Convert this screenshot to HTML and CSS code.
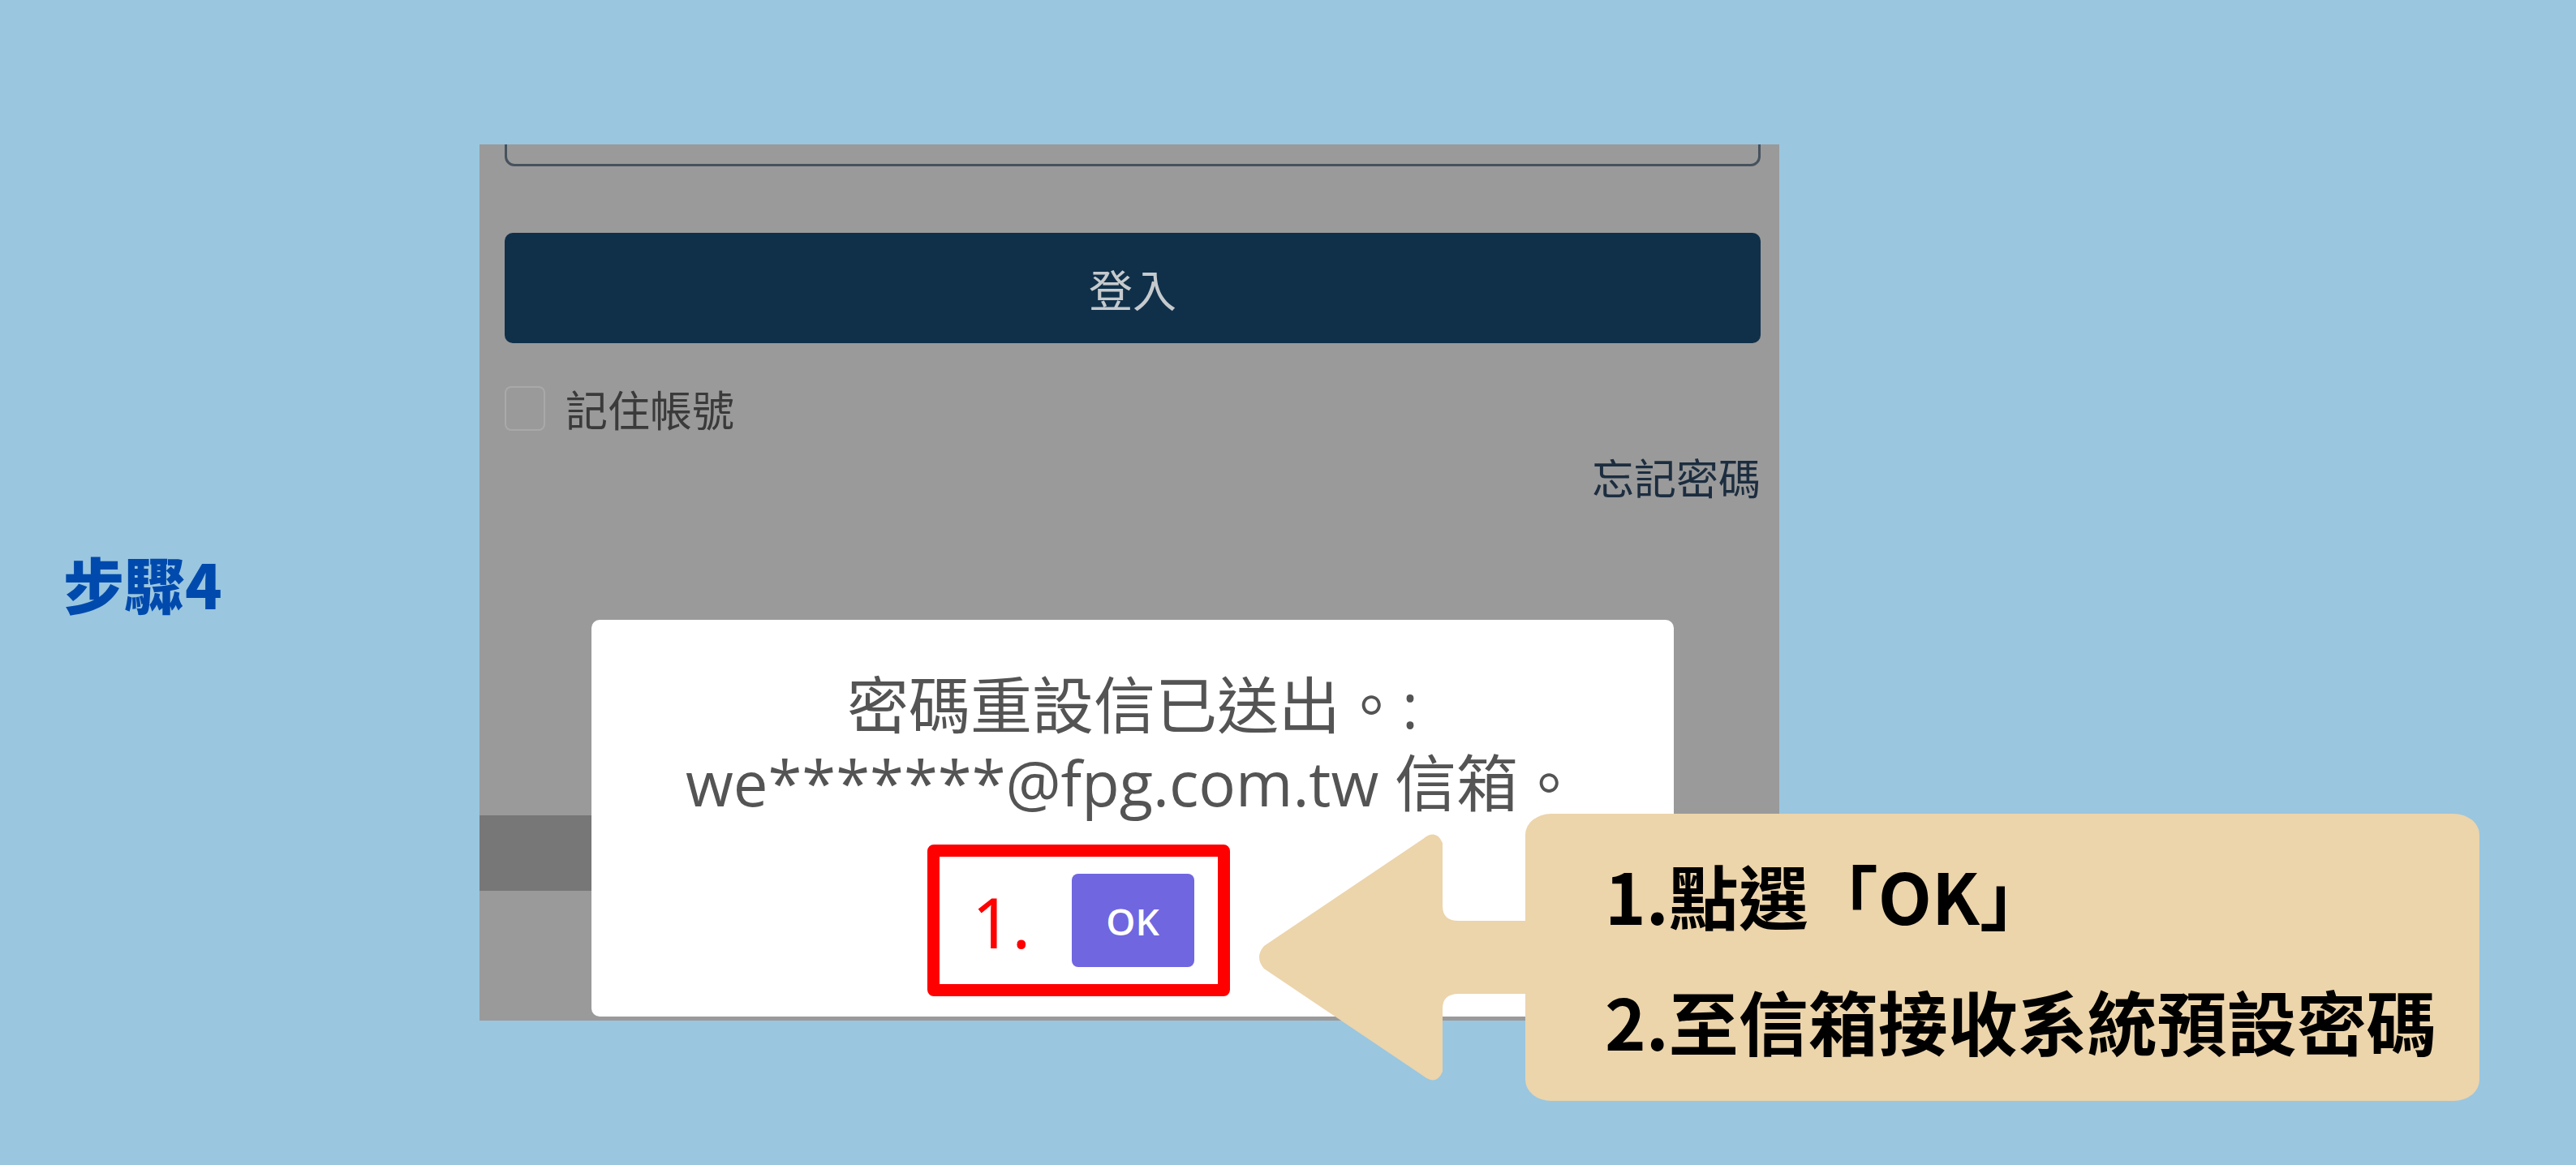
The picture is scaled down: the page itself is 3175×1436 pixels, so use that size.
FILE: index.html
```html
<!DOCTYPE html>
<html>
    <head>
        <meta charset="UTF-8">
        <title>步驟4</title>
        <link rel="stylesheet" href="styles.css">
    </head>
    <body>
        <div class="slide">
            <div class="step">步驟4</div>
            <!--登入畫面截圖-->
            <div class="shot">
                <div class="field"></div>
                <div class="login">登入</div>
                <div class="remember"><span class="check"></span>記住帳號</div>
                <div class="forgot">忘記密碼</div>
                <div class="bar"></div>
                <div class="alert">
                    <p class="msg">密碼重設信已送出。:<br>we*******@fpg.com.tw 信箱。</p>
                    <button class="ok">OK</button>
                    <div class="mark"><span>1.</span></div>
                </div>
            </div>
            <!--說明-->
            <div class="callout">
                <svg class="arrow" width="334" height="354" viewBox="0 0 334 354">
                    <path d="M 12 163 L 208 31 Q 224 18 232 36 L 232 114 Q 232 132 252 132 L 340 132 L 340 222 L 252 222 Q 232 222 232 240 L 232 318 Q 224 336 208 323 L 12 191 Q 0 177 12 163 Z" fill="#ecd4ab"/>
                </svg>
                <div class="note">
                    <p>1.點選<span class="bracket">「</span>OK<span class="bracket">」</span></p>
                    <p>2.至信箱接收系統預設密碼</p>
                </div>
            </div>
        </div>
    </body>
</html>
```

FILE: styles.css
```css
body{
    margin: 0;
    background-color: #9ac6df;
    font-family: "Noto Sans CJK TC", sans-serif;
}
.slide{
    position: relative;
    height: 1436px;
    display: flex;
    align-items: center;
}
.step{
    flex: 0 0 513px;
    margin-left: 78px;
    font-size: 75px;
    line-height: 75px;
    font-weight: 900;
    color: #004aad;
}
.shot{
    position: relative;
    flex: 0 0 1602px;
    height: 1080px;
    box-sizing: border-box;
    padding: 0 23px 0 31px;
    background-color: #9a9a9a;
    overflow: hidden;
}
.field{
    height: 100px;
    margin-top: -73px;
    box-sizing: border-box;
    border: 3px solid #46525e;
    border-radius: 12px;
}
.login{
    margin-top: 82px;
    height: 136px;
    border-radius: 10px;
    background-color: #10304a;
    color: #c6cacd;
    font-size: 54px;
    display: flex;
    align-items: center;
    justify-content: center;
}
.remember{
    margin-top: 52px;
    height: 57px;
    display: flex;
    align-items: center;
    gap: 25px;
    font-size: 52px;
    color: #3a3a3a;
}
.check{
    width: 50px;
    height: 55px;
    box-sizing: border-box;
    border: 2px solid #a9a9a9;
    border-radius: 8px;
}
.forgot{
    margin-top: 26px;
    text-align: right;
    font-size: 52px;
    line-height: 60px;
    color: #1c2d3f;
}
.bar{
    margin: 387px -23px 0 -31px;
    height: 93px;
    background-color: #777777;
}
.alert{
    position: absolute;
    left: 138px;
    top: 586px;
    width: 1334px;
    height: 489px;
    box-sizing: border-box;
    padding-top: 57px;
    border-radius: 10px;
    background-color: #fff;
    text-align: center;
}
.msg{
    margin: 0;
    font-family: "Open Sans", "Noto Sans CJK TC", sans-serif;
    font-size: 76px;
    line-height: 96px;
    color: #545454;
}
.ok{
    margin-top: 64px;
    width: 151px;
    height: 115px;
    border: none;
    border-radius: 8px;
    background-color: #7066e0;
    color: #fff;
    font-family: "Open Sans", sans-serif;
    font-size: 46px;
    font-weight: 600;
}
.mark{
    position: absolute;
    left: 414px;
    top: 277px;
    width: 373px;
    height: 187px;
    box-sizing: border-box;
    border: 15px solid #ff0000;
    border-radius: 8px;
}
.mark span{
    position: absolute;
    left: 40px;
    top: 37px;
    font-family: "Noto Sans", sans-serif;
    font-size: 86px;
    line-height: 86px;
    color: #ff0000;
}
.callout{
    position: absolute;
    left: 1546px;
    top: 1003px;
    display: flex;
}
.arrow{
    flex: none;
    display: block;
}
.note{
    width: 1176px;
    height: 354px;
    box-sizing: border-box;
    padding: 22px 0 0 98px;
    border-radius: 32px / 26px;
    background-color: #ecd4ab;
    font-size: 86px;
    line-height: 155px;
    font-weight: 700;
    color: #000;
    white-space: nowrap;
}
.note p{
    margin: 0;
}
.bracket{
    font-family: "Noto Sans CJK JP", sans-serif;
}
```
